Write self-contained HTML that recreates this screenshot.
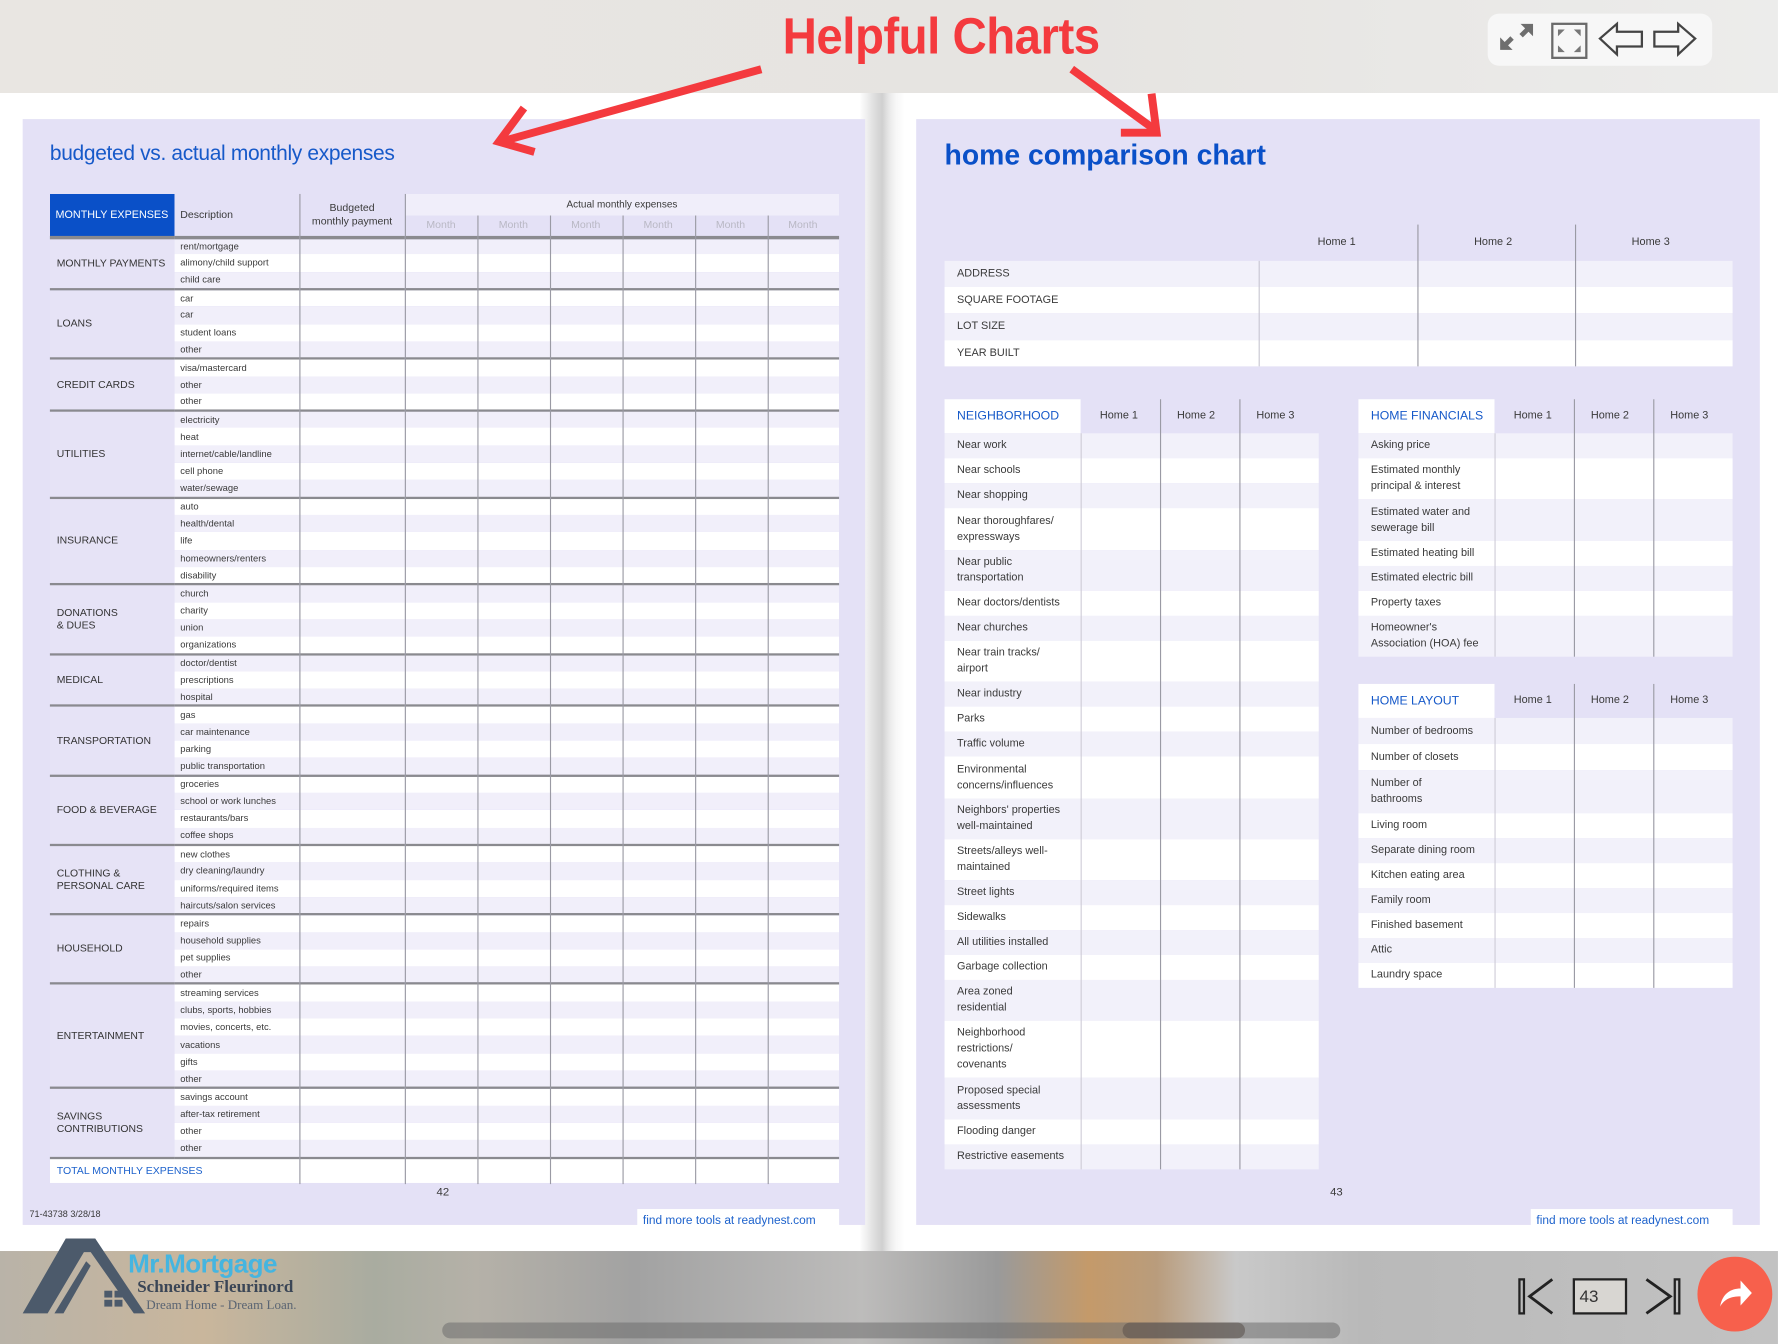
<!DOCTYPE html>
<html><head><meta charset="utf-8">
<style>
*{margin:0;padding:0;box-sizing:border-box}
html,body{width:1778px;height:1344px;overflow:hidden;background:#fff}
#w{position:absolute;left:0;top:0;width:1568px;height:1185px;transform:scale(1.1339,1.1342);transform-origin:0 0;font-family:"Liberation Sans",sans-serif;color:#3a3a3a;overflow:hidden}
.abs{position:absolute}
#top{left:0;top:0;width:1568px;height:82px;background:linear-gradient(90deg,#e9e6e2,#e6e4e1 60%,#ececeb)}
#pages{left:0;top:82px;width:1568px;height:1021px;background:#fff}
#gut{left:758px;top:82px;width:40px;height:1021px;background:linear-gradient(90deg,#fff 0,#f0f0f0 6px,#dcdcdc 14px,#d0d0d0 20px,#e8e8e8 26px,#f7f7f7 32px,#fff 40px)}
.panel{background:#e4e1f6;top:105px;height:975px}
table{border-collapse:collapse;table-layout:fixed}
.bt{position:absolute;left:44px;top:171px;width:696px;font-size:8.3px}
.bt td{padding:0 0 0 5px;height:15.32px;line-height:9px;white-space:nowrap;overflow:hidden}
.bt tr.l td{background:#f1effa}
.bt tr.wt td{background:#fff}
.bt td.cat{background:#e6e3f6 !important;font-size:9.2px;line-height:11px;padding-left:6px;color:#333}
.bt tr.e td{border-bottom:2px solid #8a8a8f}
.bt td.cat{border-bottom:2px solid #8a8a8f}
.vl{position:absolute;width:1px;background:#9a9aa4}
.hd{font-size:9.3px}
.rt{position:absolute;font-size:9.6px;color:#3a3a3a}
.rt .r{position:relative;width:100%;display:flex;align-items:center;padding-left:11px;line-height:14px}
.rt .l{background:#f2f1fa}
.rt .w{background:#fff}
</style></head><body><div id="w">

<div id="top" class="abs"></div>
<div id="pages" class="abs"></div>
<div id="gut" class="abs"></div>

<!-- toolbar -->
<div class="abs" style="left:1312px;top:12px;width:198px;height:46px;background:#f7f7f7;border-radius:10px"></div>
<svg class="abs" style="left:1312px;top:12px" width="198" height="46">
<g fill="#6e6e6e"><path d="M11 32 L11 21 L15 25 L20 20 L23 23 L18 28 L22 32Z"/><path d="M40 9 L40 20 L36 16 L31 21 L28 18 L33 13 L29 9Z"/></g>
<rect x="57" y="9" width="30" height="30" fill="none" stroke="#6a6a6a" stroke-width="2"/>
<g fill="#777"><path d="M62 14h6l-6 6z"/><path d="M82 14h-6l6 6z"/><path d="M62 34h6l-6-6z"/><path d="M82 34h-6l6-6z"/></g>
<path d="M99 22 L114 9 L114 16 L136 16 L136 29 L114 29 L114 36Z" fill="none" stroke="#444" stroke-width="2"/>
<path d="M183 22 L168 9 L168 16 L147 16 L147 29 L168 29 L168 36Z" fill="none" stroke="#444" stroke-width="2"/>
</svg>

<!-- LEFT PAGE -->
<div class="abs panel" style="left:20px;width:743px"></div>
<div class="abs" style="left:44px;top:124px;font-size:18.5px;color:#1659c9;letter-spacing:-0.3px">budgeted vs. actual monthly expenses</div>

<table class="bt">
<colgroup><col style="width:110px"><col style="width:110px"><col style="width:93px"><col style="width:383px"></colgroup>
<tr><td rowspan="2" style="background:#0a50c8;color:#fff;font-size:9.5px;height:38px;padding-left:5px;border-bottom:3px solid #8a8a8f">MONTHLY EXPENSES</td><td rowspan="2" class="hd" style="background:#e4e1f6;border-bottom:3px solid #8a8a8f">Description</td><td rowspan="2" class="hd" style="background:#e4e1f6;text-align:center;padding:0;line-height:12px;border-bottom:3px solid #8a8a8f">Budgeted<br>monthly payment</td><td style="background:#f0eefa;text-align:center;height:19px;font-size:8.8px;padding:0">Actual monthly expenses</td></tr>
<tr><td style="background:#e4e1f6;height:19px;padding:0;border-bottom:3px solid #8a8a8f;color:#b9b8c4;font-size:9.3px"><div style="display:flex"><span style="flex:1;text-align:center">Month</span><span style="flex:1;text-align:center">Month</span><span style="flex:1;text-align:center">Month</span><span style="flex:1;text-align:center">Month</span><span style="flex:1;text-align:center">Month</span><span style="flex:1;text-align:center">Month</span></div></td></tr>

<tr class="l"><td class="cat" rowspan="3">MONTHLY PAYMENTS</td><td>rent/mortgage</td><td></td><td></td></tr>
<tr class="wt"><td>alimony/child support</td><td></td><td></td></tr>
<tr class="l e"><td>child care</td><td></td><td></td></tr>

<tr class="wt"><td class="cat" rowspan="4">LOANS</td><td>car</td><td></td><td></td></tr>
<tr class="l"><td>car</td><td></td><td></td></tr>
<tr class="wt"><td>student loans</td><td></td><td></td></tr>
<tr class="l e"><td>other</td><td></td><td></td></tr>

<tr class="wt"><td class="cat" rowspan="3">CREDIT CARDS</td><td>visa/mastercard</td><td></td><td></td></tr>
<tr class="l"><td>other</td><td></td><td></td></tr>
<tr class="wt e"><td>other</td><td></td><td></td></tr>

<tr class="l"><td class="cat" rowspan="5">UTILITIES</td><td>electricity</td><td></td><td></td></tr>
<tr class="wt"><td>heat</td><td></td><td></td></tr>
<tr class="l"><td>internet/cable/landline</td><td></td><td></td></tr>
<tr class="wt"><td>cell phone</td><td></td><td></td></tr>
<tr class="l e"><td>water/sewage</td><td></td><td></td></tr>

<tr class="wt"><td class="cat" rowspan="5">INSURANCE</td><td>auto</td><td></td><td></td></tr>
<tr class="l"><td>health/dental</td><td></td><td></td></tr>
<tr class="wt"><td>life</td><td></td><td></td></tr>
<tr class="l"><td>homeowners/renters</td><td></td><td></td></tr>
<tr class="wt e"><td>disability</td><td></td><td></td></tr>

<tr class="l"><td class="cat" rowspan="4">DONATIONS<br>&amp; DUES</td><td>church</td><td></td><td></td></tr>
<tr class="wt"><td>charity</td><td></td><td></td></tr>
<tr class="l"><td>union</td><td></td><td></td></tr>
<tr class="wt e"><td>organizations</td><td></td><td></td></tr>

<tr class="l"><td class="cat" rowspan="3">MEDICAL</td><td>doctor/dentist</td><td></td><td></td></tr>
<tr class="wt"><td>prescriptions</td><td></td><td></td></tr>
<tr class="l e"><td>hospital</td><td></td><td></td></tr>

<tr class="wt"><td class="cat" rowspan="4">TRANSPORTATION</td><td>gas</td><td></td><td></td></tr>
<tr class="l"><td>car maintenance</td><td></td><td></td></tr>
<tr class="wt"><td>parking</td><td></td><td></td></tr>
<tr class="l e"><td>public transportation</td><td></td><td></td></tr>

<tr class="wt"><td class="cat" rowspan="4">FOOD &amp; BEVERAGE</td><td>groceries</td><td></td><td></td></tr>
<tr class="l"><td>school or work lunches</td><td></td><td></td></tr>
<tr class="wt"><td>restaurants/bars</td><td></td><td></td></tr>
<tr class="l e"><td>coffee shops</td><td></td><td></td></tr>

<tr class="wt"><td class="cat" rowspan="4">CLOTHING &amp;<br>PERSONAL CARE</td><td>new clothes</td><td></td><td></td></tr>
<tr class="l"><td>dry cleaning/laundry</td><td></td><td></td></tr>
<tr class="wt"><td>uniforms/required items</td><td></td><td></td></tr>
<tr class="l e"><td>haircuts/salon services</td><td></td><td></td></tr>

<tr class="wt"><td class="cat" rowspan="4">HOUSEHOLD</td><td>repairs</td><td></td><td></td></tr>
<tr class="l"><td>household supplies</td><td></td><td></td></tr>
<tr class="wt"><td>pet supplies</td><td></td><td></td></tr>
<tr class="l e"><td>other</td><td></td><td></td></tr>

<tr class="wt"><td class="cat" rowspan="6">ENTERTAINMENT</td><td>streaming services</td><td></td><td></td></tr>
<tr class="l"><td>clubs, sports, hobbies</td><td></td><td></td></tr>
<tr class="wt"><td>movies, concerts, etc.</td><td></td><td></td></tr>
<tr class="l"><td>vacations</td><td></td><td></td></tr>
<tr class="wt"><td>gifts</td><td></td><td></td></tr>
<tr class="l e"><td>other</td><td></td><td></td></tr>

<tr class="wt"><td class="cat" rowspan="4">SAVINGS<br>CONTRIBUTIONS</td><td>savings account</td><td></td><td></td></tr>
<tr class="l"><td>after-tax retirement</td><td></td><td></td></tr>
<tr class="wt"><td>other</td><td></td><td></td></tr>
<tr class="l e"><td>other</td><td></td><td></td></tr>

<tr class="wt"><td colspan="2" style="height:22px;color:#1d62cc;font-size:9.3px;padding-left:6px">TOTAL MONTHLY EXPENSES</td><td></td><td></td></tr>
</table>
<div class="vl" style="left:264px;top:171px;height:873px"></div>
<div class="vl" style="left:357px;top:171px;height:873px"></div>
<div class="vl" style="left:421px;top:190px;height:854px"></div>
<div class="vl" style="left:485px;top:190px;height:854px"></div>
<div class="vl" style="left:549px;top:190px;height:854px"></div>
<div class="vl" style="left:613px;top:190px;height:854px"></div>
<div class="vl" style="left:677px;top:190px;height:854px"></div>

<div class="abs" style="left:385px;top:1046px;font-size:10px">42</div>
<div class="abs" style="left:26px;top:1066px;font-size:8px">71-43738 3/28/18</div>
<div class="abs" style="left:562px;top:1066px;width:178px;height:20px;background:#fff;color:#1d62cc;font-size:10.5px;padding:4px 0 0 5px">find more tools at readynest.com</div>

<!-- RIGHT PAGE -->
<div class="abs panel" style="left:808px;width:744px"></div>
<div class="abs" style="left:833px;top:123px;font-size:25px;font-weight:bold;color:#0a50c8">home comparison chart</div>

<div class="rt" style="left:833px;top:198px;width:695px">
 <div style="height:32px;position:relative"><span class="abs" style="left:329px;top:10px">Home 1</span><span class="abs" style="left:467px;top:10px">Home 2</span><span class="abs" style="left:606px;top:10px">Home 3</span></div>
 <div class="r l" style="height:23px">ADDRESS</div>
 <div class="r w" style="height:23px">SQUARE FOOTAGE</div>
 <div class="r l" style="height:24px">LOT SIZE</div>
 <div class="r w" style="height:23px">YEAR BUILT</div>
</div>
<div class="vl" style="left:1110px;top:230px;height:93px;background:#c8c6d2"></div>
<div class="vl" style="left:1250px;top:198px;height:125px"></div>
<div class="vl" style="left:1389px;top:198px;height:125px"></div>

<div class="rt" style="left:833px;top:352px;width:330px">
 <div style="height:30px;position:relative"><div class="abs" style="left:0;top:0;width:120px;height:30px;background:#fff;color:#1659c9;font-size:10.8px;padding:9px 0 0 11px">NEIGHBORHOOD</div><span class="abs" style="left:137px;top:9px">Home 1</span><span class="abs" style="left:205px;top:9px">Home 2</span><span class="abs" style="left:275px;top:9px">Home 3</span></div>
 <div class="r l" style="height:22px">Near work</div>
 <div class="r w" style="height:22px">Near schools</div>
 <div class="r l" style="height:22px">Near shopping</div>
 <div class="r w" style="height:37px">Near thoroughfares/<br>expressways</div>
 <div class="r l" style="height:36px">Near public<br>transportation</div>
 <div class="r w" style="height:22px">Near doctors/dentists</div>
 <div class="r l" style="height:22px">Near churches</div>
 <div class="r w" style="height:36px">Near train tracks/<br>airport</div>
 <div class="r l" style="height:22px">Near industry</div>
 <div class="r w" style="height:22px">Parks</div>
 <div class="r l" style="height:22px">Traffic volume</div>
 <div class="r w" style="height:37px">Environmental<br>concerns/influences</div>
 <div class="r l" style="height:36px">Neighbors' properties<br>well-maintained</div>
 <div class="r w" style="height:36px">Streets/alleys well-<br>maintained</div>
 <div class="r l" style="height:22px">Street lights</div>
 <div class="r w" style="height:22px">Sidewalks</div>
 <div class="r l" style="height:22px">All utilities installed</div>
 <div class="r w" style="height:22px">Garbage collection</div>
 <div class="r l" style="height:36px">Area zoned<br>residential</div>
 <div class="r w" style="height:50px">Neighborhood<br>restrictions/<br>covenants</div>
 <div class="r l" style="height:37px">Proposed special<br>assessments</div>
 <div class="r w" style="height:22px">Flooding danger</div>
 <div class="r l" style="height:22px">Restrictive easements</div>
</div>
<div class="vl" style="left:953px;top:382px;height:649px;background:#cfcdd8"></div>
<div class="vl" style="left:1023px;top:352px;height:679px"></div>
<div class="vl" style="left:1093px;top:352px;height:679px"></div>

<div class="rt" style="left:1198px;top:352px;width:330px">
 <div style="height:30px;position:relative"><div class="abs" style="left:0;top:0;width:120px;height:30px;background:#fff;color:#1659c9;font-size:10.8px;padding:9px 0 0 11px">HOME FINANCIALS</div><span class="abs" style="left:137px;top:9px">Home 1</span><span class="abs" style="left:205px;top:9px">Home 2</span><span class="abs" style="left:275px;top:9px">Home 3</span></div>
 <div class="r l" style="height:22px">Asking price</div>
 <div class="r w" style="height:36px">Estimated monthly<br>principal &amp; interest</div>
 <div class="r l" style="height:37px">Estimated water and<br>sewerage bill</div>
 <div class="r w" style="height:22px">Estimated heating bill</div>
 <div class="r l" style="height:22px">Estimated electric bill</div>
 <div class="r w" style="height:22px">Property taxes</div>
 <div class="r l" style="height:36px">Homeowner's<br>Association (HOA) fee</div>
</div>
<div class="vl" style="left:1318px;top:382px;height:197px;background:#cfcdd8"></div>
<div class="vl" style="left:1388px;top:352px;height:227px"></div>
<div class="vl" style="left:1458px;top:352px;height:227px"></div>

<div class="rt" style="left:1198px;top:603px;width:330px">
 <div style="height:30px;position:relative"><div class="abs" style="left:0;top:0;width:120px;height:30px;background:#fff;color:#1659c9;font-size:10.8px;padding:9px 0 0 11px">HOME LAYOUT</div><span class="abs" style="left:137px;top:9px">Home 1</span><span class="abs" style="left:205px;top:9px">Home 2</span><span class="abs" style="left:275px;top:9px">Home 3</span></div>
 <div class="r l" style="height:23px">Number of bedrooms</div>
 <div class="r w" style="height:23px">Number of closets</div>
 <div class="r l" style="height:38px">Number of<br>bathrooms</div>
 <div class="r w" style="height:22px">Living room</div>
 <div class="r l" style="height:22px">Separate dining room</div>
 <div class="r w" style="height:22px">Kitchen eating area</div>
 <div class="r l" style="height:22px">Family room</div>
 <div class="r w" style="height:22px">Finished basement</div>
 <div class="r l" style="height:22px">Attic</div>
 <div class="r w" style="height:22px">Laundry space</div>
</div>
<div class="vl" style="left:1318px;top:633px;height:238px;background:#cfcdd8"></div>
<div class="vl" style="left:1388px;top:603px;height:268px"></div>
<div class="vl" style="left:1458px;top:603px;height:268px"></div>

<div class="abs" style="left:1173px;top:1046px;font-size:10px">43</div>
<div class="abs" style="left:1350px;top:1066px;width:178px;height:20px;background:#fff;color:#1d62cc;font-size:10.5px;padding:4px 0 0 5px">find more tools at readynest.com</div>

<!-- BOTTOM BAR -->
<div class="abs" style="left:0;top:1103px;width:1568px;height:82px;background:linear-gradient(90deg,#b9b3a8 0,#c9b69c 180px,#a9aca0 330px,#b5b1a8 420px,#a2a2a2 560px,#bdbcbb 760px,#9a9a9a 880px,#c49a6a 960px,#b99c7c 1020px,#c9c9c9 1090px,#b9b9b9 1200px,#c2c2c2 1568px)"></div>
<div class="abs" style="left:390px;top:1166px;width:792px;height:14px;border-radius:7px;background:rgba(110,110,110,0.55)"></div>
<div class="abs" style="left:990px;top:1166px;width:108px;height:14px;border-radius:7px;background:rgba(90,80,75,0.55)"></div>

<!-- logo -->
<svg class="abs" style="left:18px;top:1088px" width="112" height="75">
<path d="M2 70 L40 4 L66 4 L110 70 L100 70 L62 16 L56 16 L24 70Z" fill="#4c5a6b"/>
<path d="M30 70 L58 24 L62 28 L38 70Z" fill="#4c5a6b"/>
<g fill="#4c5a6b"><rect x="74" y="50" width="7" height="6"/><rect x="83" y="50" width="7" height="6"/><rect x="74" y="58" width="7" height="6"/><rect x="83" y="58" width="7" height="6"/></g>
</svg>
<div class="abs" style="left:113px;top:1101px;font-size:23px;font-weight:bold;color:#45b5e0;letter-spacing:-0.5px">Mr.Mortgage</div>
<div class="abs" style="left:121px;top:1127px;font-family:'Liberation Serif',serif;font-size:15px;font-weight:bold;color:#3b4656">Schneider Fleurinord</div>
<div class="abs" style="left:129px;top:1145px;font-family:'Liberation Serif',serif;font-size:11.5px;color:#5a6472">Dream Home - Dream Loan.</div>

<!-- nav -->
<svg class="abs" style="left:1335px;top:1120px" width="160" height="44">
<rect x="5" y="8" width="4" height="30" fill="none" stroke="#222" stroke-width="2"/>
<path d="M34 8 L14 23 L34 38" fill="none" stroke="#222" stroke-width="2.5"/>
<rect x="53" y="8" width="46" height="30" fill="#d8d6d2" stroke="#222" stroke-width="2"/>
<path d="M117 8 L138 23 L117 38" fill="none" stroke="#222" stroke-width="2.5"/>
<rect x="142" y="8" width="4" height="30" fill="none" stroke="#222" stroke-width="2"/>
</svg>
<div class="abs" style="left:1393px;top:1135px;font-size:15px;color:#333">43</div>
<div class="abs" style="left:1497px;top:1108px;width:66px;height:66px;border-radius:50%;background:#f7604c"></div>
<svg class="abs" style="left:1513px;top:1126px" width="34" height="30"><path d="M4 26 C6 14 14 10 22 10 L22 3 L32 14 L22 25 L22 17 C14 17 8 19 4 26Z" fill="#fff"/></svg>

<!-- title + arrows (on top) -->
<div class="abs" style="left:660px;top:6px;width:340px;text-align:center;font-size:45px;font-weight:bold;color:#f43a3e;letter-spacing:-0.5px;transform:scaleX(0.93)">Helpful Charts</div>
<svg class="abs" style="left:0;top:0" width="1568" height="140">
<g stroke="#f43a3e" stroke-width="7" fill="none" stroke-linecap="square" stroke-linejoin="miter">
<path d="M668 62 L445 124"/><path d="M460 98 L440 125 L468 133"/>
<path d="M948 63 L1018 114"/><path d="M1016 86 L1020 117 L992 117"/>
</g></svg>

</div></body></html>
